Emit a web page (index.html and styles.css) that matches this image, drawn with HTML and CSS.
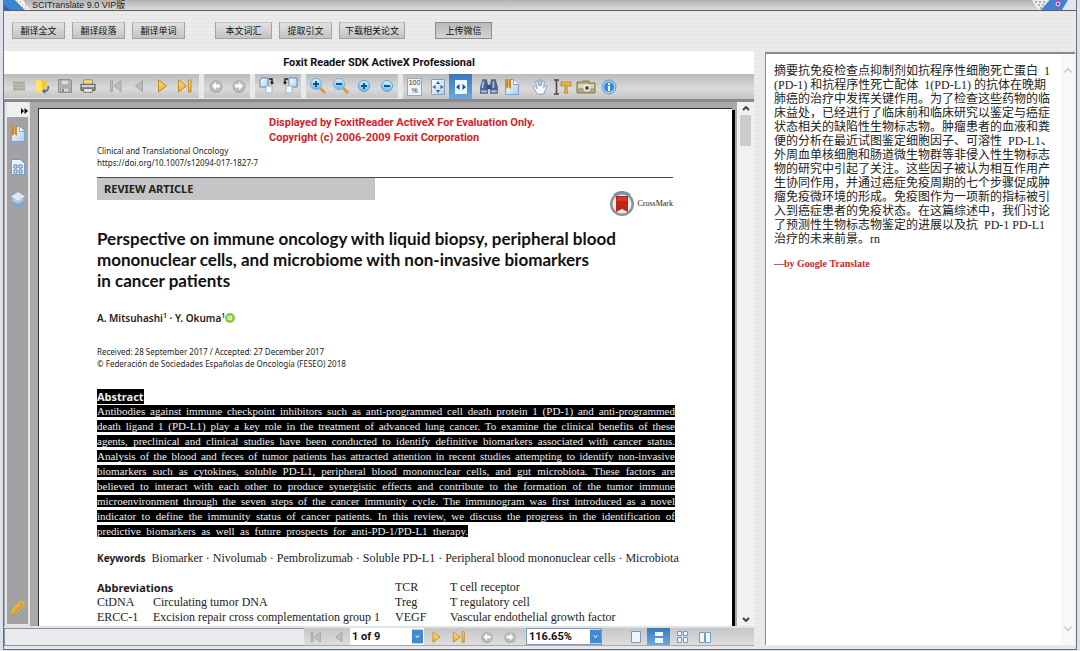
FILE: index.html
```html
<!DOCTYPE html>
<html lang="zh-CN">
<head>
<meta charset="utf-8">
<title>SCITranslate 9.0 VIP版</title>
<link rel="stylesheet" href="styles.css">
</head>
<body>
<svg class="defs" aria-hidden="true">
  <defs>
    <linearGradient id="gold" x1="0" y1="0" x2="0" y2="1"><stop offset="0" stop-color="#ffe27a"/><stop offset="1" stop-color="#f0a92a"/></linearGradient>
    <linearGradient id="sheet" x1="0" y1="0" x2="1" y2="1"><stop offset="0" stop-color="#ffffff"/><stop offset="1" stop-color="#a9cdee"/></linearGradient>
    <linearGradient id="lens" x1="0" y1="0" x2="0" y2="1"><stop offset="0" stop-color="#d8f0ff"/><stop offset="1" stop-color="#6fb6e8"/></linearGradient>
    <symbol id="first" viewBox="0 0 16 16"><path d="M2.500 2.500h2v11h-2zM13 2.500v11L6 8z"/></symbol>
    <symbol id="prev" viewBox="0 0 16 16"><path d="M11.500 2.500v11L4.500 8z"/></symbol>
    <symbol id="next" viewBox="0 0 16 16"><path d="M4.500 2v12L12.500 8z"/></symbol>
    <symbol id="last" viewBox="0 0 16 16"><path d="M1.500 2v12L9.500 8zM11.500 2h2.500v12h-2.500z"/></symbol>
    <symbol id="back" viewBox="0 0 16 16"><circle cx="8" cy="8.500" r="6.500" fill="#a8aea8"/><circle cx="8" cy="8" r="5.500" fill="#b9beb8"/><path d="M4 8l4-4v2.500h4v3H8V12z" fill="#fff"/></symbol>
    <symbol id="forward" viewBox="0 0 16 16"><circle cx="8" cy="8.500" r="6.500" fill="#a8aea8"/><circle cx="8" cy="8" r="5.500" fill="#b9beb8"/><path d="M12 8L8 4v2.500H4v3h4V12z" fill="#fff"/></symbol>
    <symbol id="bookmark" viewBox="0 0 16 18"><path d="M1.500 1.500h8l5 5v10h-13z" fill="url(#sheet)" stroke="#7ba3cc"/><path d="M9.500 1.500v5h5" fill="#fff" stroke="#7ba3cc"/><path d="M2 1h5v10L4.500 9 2 11z" fill="#c98a35"/><path d="M4.500 1v8" stroke="#e5b364"/></symbol>
    <symbol id="plus" viewBox="0 0 16 16"><circle cx="8" cy="8" r="5.500" fill="url(#lens)" stroke="#5aa3d8"/><path d="M5 8h6M8 5v6" stroke="#14558c" stroke-width="2"/></symbol>
    <symbol id="minus" viewBox="0 0 16 16"><circle cx="8" cy="8" r="5.500" fill="url(#lens)" stroke="#5aa3d8"/><path d="M5 8h6" stroke="#14558c" stroke-width="2"/></symbol>
  </defs>
</svg>

<div class="window">
  <header class="titlebar">
    <svg class="title-art" viewBox="0 0 26 10" aria-hidden="true"><path d="M0 0h11l10 10H0z" fill="#3d83cf"/><path d="M0 5l6 5H0z" fill="#2a66b0"/><path d="M11 0h8l7 10h-5z" fill="#f2f2f2"/><path d="M13 2h6M15 5h7M18 8h6" stroke="#a88" stroke-dasharray="1 2"/></svg>
    <h1 class="title-text">SCITranslate 9.0 VIP版</h1>
    <button class="close" type="button" aria-label="关闭">
      <svg viewBox="0 0 44 10" aria-hidden="true"><path d="M0 0h17l-8 10H6z" fill="#ececec"/><path d="M3 2h11M6 5h7M8 8h3" stroke="#777" stroke-dasharray="2 2"/><path d="M18 0h26l-8 10H9z" fill="#3d83cf"/><path d="M36 0h8v10h-14z" fill="#dfe6ef"/><circle cx="26" cy="4" r="3" fill="#d9b8ee" stroke="#8b5fc0"/><path d="M25 3l2 2M27 3l-2 2" stroke="#a0308c"/></svg>
    </button>
  </header>

  <nav class="commands" aria-label="翻译命令">
    <button class="cmd" type="button">翻译全文</button>
    <button class="cmd" type="button">翻译段落</button>
    <button class="cmd cmd-end" type="button">翻译单词</button>
    <button class="cmd cmd-wide" type="button">本文词汇</button>
    <button class="cmd" type="button">提取引文</button>
    <button class="cmd cmd-long cmd-end" type="button">下载相关论文</button>
    <button class="cmd cmd-wide cmd-dark" type="button">上传微信</button>
  </nav>

  <main class="workspace">
    <section class="viewer" aria-label="PDF">
      <h2 class="viewer-title">Foxit Reader SDK ActiveX Professional</h2>

      <div class="toolbar" role="toolbar" aria-label="Reader tools">
        <div class="group group-first">
          <button class="tool" type="button" aria-label="List"><svg viewBox="0 0 16 16"><path d="M2 3h12v10H2z" fill="#b9bab0"/><path d="M2 5h12M2 8h12M2 11h12" stroke="#a5a69a"/></svg></button>
          <button class="tool" type="button" aria-label="Open"><svg viewBox="0 0 18 18"><path d="M2 2h9l3 3v10l-3 2-9-2z" fill="#f5c92c"/><path d="M2 2l7 2v13l-7-2z" fill="#ffe566"/><path d="M16 9q1 6-5 6" stroke="#3d6fb0" stroke-width="2" fill="none"/><path d="M12 12l-3 3 4 3z" fill="#3d6fb0"/></svg></button>
          <button class="tool" type="button" aria-label="Save"><svg viewBox="0 0 16 16"><path d="M1.500 1.500h12l1 1v12h-13z" fill="#b5b5b5" stroke="#8d8d8d"/><path d="M4 2h8v5H4zM4 10h8v4H4z" fill="#dcdcdc" stroke="#999"/><path d="M6 11v3" stroke="#888" stroke-width="2"/></svg></button>
          <button class="tool" type="button" aria-label="Print"><svg viewBox="0 0 18 16"><path d="M4 1h10v6H4z" fill="#f6d876" stroke="#9a8950"/><path d="M1 6h16v7H1z" fill="#8b8e93" stroke="#55585c"/><path d="M2 8h14" stroke="#d5d8db" stroke-width="2"/><path d="M4 11h10v4H4z" fill="#f1f1ea" stroke="#6b6b6b"/></svg></button>
          <span class="sep"></span>
          <button class="tool nav off" type="button" aria-label="First page"><svg><use href="#first"/></svg></button>
          <button class="tool nav off" type="button" aria-label="Previous page"><svg><use href="#prev"/></svg></button>
          <button class="tool nav" type="button" aria-label="Next page"><svg><use href="#next"/></svg></button>
          <button class="tool nav" type="button" aria-label="Last page"><svg><use href="#last"/></svg></button>
        </div>
        <div class="group">
          <button class="tool" type="button" aria-label="Back"><svg><use href="#back"/></svg></button>
          <button class="tool" type="button" aria-label="Forward"><svg><use href="#forward"/></svg></button>
        </div>
        <div class="group">
          <button class="tool" type="button" aria-label="Rotate right"><svg viewBox="0 0 16 18"><path d="M3 1h6v9H1V3z" fill="url(#sheet)" stroke="#5f87b5"/><path d="M7 9h6v7H7z" fill="#f5f9ff" stroke="#9db4cc"/><path d="M10 2h3v3" stroke="#222" stroke-width="1.500" fill="none"/><path d="M11 5h4l-2 3z" fill="#222"/></svg></button>
          <button class="tool" type="button" aria-label="Rotate left"><svg viewBox="0 0 16 18"><path d="M7 1h8v9H7z" fill="url(#sheet)" stroke="#5f87b5"/><path d="M4 9h6v7H4z" fill="#f5f9ff" stroke="#9db4cc"/><path d="M6 2H3v3" stroke="#222" stroke-width="1.500" fill="none"/><path d="M1 5h4L3 8z" fill="#222"/></svg></button>
        </div>
        <div class="group">
          <button class="tool" type="button" aria-label="Zoom in"><svg class="wide" viewBox="0 0 18 18"><path d="M11 11l5 5" stroke="#d49a4a" stroke-width="3"/><circle cx="7" cy="7" r="5.500" fill="url(#lens)" stroke="#6fb0de"/><path d="M4 7h6M7 4v6" stroke="#14558c" stroke-width="2"/></svg></button>
          <button class="tool" type="button" aria-label="Zoom out"><svg class="wide" viewBox="0 0 18 18"><path d="M11 11l5 5" stroke="#d49a4a" stroke-width="3"/><circle cx="7" cy="7" r="5.500" fill="url(#lens)" stroke="#6fb0de"/><path d="M4 7h6" stroke="#14558c" stroke-width="2"/></svg></button>
          <button class="tool" type="button" aria-label="Increase"><svg><use href="#plus"/></svg></button>
          <button class="tool" type="button" aria-label="Decrease"><svg><use href="#minus"/></svg></button>
        </div>
        <div class="group group-last">
          <button class="tool" type="button" aria-label="Actual size"><span class="actual">100<br>%</span></button>
          <button class="tool" type="button" aria-label="Fit page"><svg viewBox="0 0 16 18"><path d="M1.500 1.500h13v15h-13z" fill="url(#sheet)" stroke="#7e9fc4"/><path d="M8 3l2 3H6zM8 15l2-3H6zM2.500 9l3-2v4zM13.500 9l-3-2v4z" fill="#3e5d80"/></svg></button>
          <button class="tool on" type="button" aria-label="Fit width" aria-pressed="true"><svg viewBox="0 0 16 18"><path d="M2 2h12v14H2z" fill="#eef6ff"/><path d="M3 9l3.500-3v6zM13 9L9.500 6v6z" fill="#1d4f8a"/></svg></button>
          <span class="sep"></span>
          <button class="tool" type="button" aria-label="Find"><svg class="wide" viewBox="0 0 18 16"><path d="M3 1h4l1 4v9H1V8zM11 1h4l2 7v6h-7V5z" fill="#4d6293"/><path d="M7 6h4v4H7z" fill="#3b4e7c"/><path d="M4 3L3 9M13 3v6" stroke="#b3c3e6" stroke-width="1.500"/><path d="M2 12h5M11 12h5" stroke="#a9bbdf" stroke-width="2"/></svg></button>
          <button class="tool" type="button" aria-label="Bookmark"><svg><use href="#bookmark"/></svg></button>
          <span class="sep"></span>
          <button class="tool" type="button" aria-label="Hand"><svg viewBox="0 0 18 18"><path d="M6 17L1 9l2-1 3 3L4 3l2-1 2 6V1h2v7l2-6 2 1-1 7 3-3 1 1-4 9z" fill="#f7fbff" stroke="#7b9cc0" stroke-linejoin="round"/></svg></button>
          <button class="tool" type="button" aria-label="Select text"><svg class="wide" viewBox="0 0 20 18"><path d="M1 2h5M1 16h5M3.500 2v14" stroke="#444" stroke-width="1.500"/><path d="M8 4h10v4h-2l-1-1h-1v6l1 1v1h-4v-1l1-1V7h-1l-1 1H8z" fill="#f0b840" stroke="#b98a2a"/></svg></button>
          <button class="tool" type="button" aria-label="Snapshot"><svg class="wide" viewBox="0 0 20 16"><path d="M1 3h5l1-1h6v2h6v10H1z" fill="#b5a779" stroke="#85794f"/><path d="M2 5h16v4H2z" fill="#ddd3ad"/><circle cx="11" cy="9" r="3.500" fill="#f4f4f0"/><circle cx="11" cy="9" r="2" fill="#4e4e62"/></svg></button>
          <button class="tool" type="button" aria-label="About"><svg viewBox="0 0 16 16"><circle cx="8" cy="8" r="7" fill="#a5cdee" stroke="#6a9cca"/><circle cx="8" cy="8" r="5" fill="#3a8bd0"/><path d="M8 4v2M8 7v5" stroke="#fff" stroke-width="2"/></svg></button>
        </div>
      </div>

      <div class="reader">
        <aside class="side">
          <button class="side-head" type="button" aria-label="Expand"><svg viewBox="0 0 7 6"><path d="M0 0l3 3-3 3zM3.500 0l3.500 3-3.500 3z" fill="#000"/></svg></button>
          <button class="side-btn" type="button" aria-label="Bookmarks"><svg><use href="#bookmark"/></svg></button>
          <button class="side-btn" type="button" aria-label="Pages"><svg viewBox="0 0 16 18"><path d="M1.500 1.500h9l4 4v11h-13z" fill="#e9f3fd" stroke="#6f9ccb"/><path d="M4 7h3v3H4zM9 7h3v3H9zM4 12h3v3H4zM9 12h3v3H9z" fill="#fff" stroke="#4679b4"/></svg></button>
          <button class="side-btn" type="button" aria-label="Layers"><svg viewBox="0 0 16 18"><path d="M8 9l7 4-7 4-7-4z" fill="#7ea6d4"/><path d="M8 5l7 4-7 4-7-4z" fill="#a9c6e6"/><path d="M8 1l7 4.500L8 10 1 5.500z" fill="#dbe9f7"/></svg></button>
          <button class="side-btn side-clip" type="button" aria-label="Attachments"><svg viewBox="0 0 16 18"><path d="M2 15l1-5 7-7q4-1 4 2l-8 9q-3 1-2-2l7-7" fill="none" stroke="#e0b03a" stroke-width="2"/><path d="M1 16l3-1 9-10" fill="none" stroke="#c18e22"/></svg></button>
        </aside>

        <div class="canvas">
          <article class="page">
            <p class="notice">Displayed by FoxitReader ActiveX For Evaluation Only.<br>Copyright (c) 2006-2009 Foxit Corporation</p>
            <p class="journal">Clinical and Translational Oncology<br>https://doi.org/10.1007/s12094-017-1827-7</p>
            <div class="kind-row">
              <p class="kind">REVIEW ARTICLE</p>
              <p class="crossmark"><svg viewBox="0 0 26 26" aria-hidden="true"><circle cx="13" cy="13" r="12" fill="#8d9299"/><path d="M5 4a12 12 0 0 1 16 0" fill="none" stroke="#6f93b8" stroke-width="2"/><circle cx="13" cy="13" r="9.500" fill="#e9ecef"/><path d="M7 5h12v16l-6-3-6 3z" fill="#bf2418"/><path d="M8 6h10v4H8z" fill="#cf3a2a"/></svg>CrossMark</p>
            </div>
            <h3 class="paper-title">Perspective on immune oncology with liquid biopsy, peripheral blood<br>mononuclear cells, and microbiome with non-invasive biomarkers<br>in cancer patients</h3>
            <p class="authors">A. Mitsuhashi<sup>1</sup> · Y. Okuma<sup>1</sup><svg viewBox="0 0 10 10" aria-hidden="true"><circle cx="5" cy="5" r="5" fill="#8cc63f"/><path d="M3 3v4M5 3v4h1q2-2 0-4z" stroke="#fff" fill="none"/></svg></p>
            <p class="dates">Received: 28 September 2017 / Accepted: 27 December 2017<br>© Federación de Sociedades Españolas de Oncología (FESEO) 2018</p>
            <h4 class="sub"><mark>Abstract</mark></h4>
            <p class="abstract"><mark>Antibodies against immune checkpoint inhibitors such as anti-programmed cell death protein 1 (PD-1) and anti-programmed<br>death ligand 1 (PD-L1) play a key role in the treatment of advanced lung cancer. To examine the clinical benefits of these<br>agents, preclinical and clinical studies have been conducted to identify definitive biomarkers associated with cancer status.<br>Analysis of the blood and feces of tumor patients has attracted attention in recent studies attempting to identify non-invasive<br>biomarkers such as cytokines, soluble PD-L1, peripheral blood mononuclear cells, and gut microbiota. These factors are<br>believed to interact with each other to produce synergistic effects and contribute to the formation of the tumor immune<br>microenvironment through the seven steps of the cancer immunity cycle. The immunogram was first introduced as a novel<br>indicator to define the immunity status of cancer patients. In this review, we discuss the progress in the identification of</mark></p>
            <p class="abstract abstract-end"><mark>predictive biomarkers as well as future prospects for anti-PD-1/PD-L1 therapy.</mark></p>
            <p class="keywords"><b>Keywords</b>Biomarker · Nivolumab · Pembrolizumab · Soluble PD-L1 · Peripheral blood mononuclear cells · Microbiota</p>
            <table class="abbr">
              <tr><th colspan="2" scope="colgroup">Abbreviations</th><td>TCR</td><td>T cell receptor</td></tr>
              <tr><td class="c1">CtDNA</td><td class="c2">Circulating tumor DNA</td><td class="c3">Treg</td><td>T regulatory cell</td></tr>
              <tr><td>ERCC-1</td><td>Excision repair cross complementation group 1</td><td>VEGF</td><td>Vascular endothelial growth factor</td></tr>
            </table>
          </article>
        </div>

        <div class="scroll">
          <button class="scroll-btn" type="button" aria-label="Scroll up"><svg viewBox="0 0 8 5"><path d="M1 4l3-3 3 3"/></svg></button>
          <span class="thumb"></span>
          <button class="scroll-btn scroll-down" type="button" aria-label="Scroll down"><svg viewBox="0 0 8 5"><path d="M1 1l3 3 3-3"/></svg></button>
        </div>
      </div>

      <footer class="status">
        <div class="message"></div>
        <div class="pager">
          <button class="tool nav off" type="button" aria-label="First page"><svg><use href="#first"/></svg></button>
          <button class="tool nav off" type="button" aria-label="Previous page"><svg><use href="#prev"/></svg></button>
          <label class="combo"><select aria-label="Page"><option>1 of 9</option></select><svg viewBox="0 0 12 15" aria-hidden="true"><path d="M0 0h12v15H0z" fill="#3f8ad0"/><path d="M4 6l2 3 2-3" fill="none" stroke="#fff"/></svg></label>
          <button class="tool nav" type="button" aria-label="Next page"><svg><use href="#next"/></svg></button>
          <button class="tool nav" type="button" aria-label="Last page"><svg><use href="#last"/></svg></button>
          <span class="sep"></span>
          <button class="tool" type="button" aria-label="Back"><svg><use href="#back"/></svg></button>
          <button class="tool" type="button" aria-label="Forward"><svg><use href="#forward"/></svg></button>
          <span class="sep"></span>
          <label class="combo combo-zoom"><select aria-label="Zoom"><option>116.65%</option></select><svg viewBox="0 0 12 15" aria-hidden="true"><path d="M0 0h12v15H0z" fill="#3f8ad0"/><path d="M4 6l2 3 2-3" fill="none" stroke="#fff"/></svg></label>
          <div class="layouts">
            <button class="tool" type="button" aria-label="Single page"><svg viewBox="0 0 14 16"><path d="M2.500 2.500h9v11h-9z" fill="#edf5fd" stroke="#6f9ccb"/></svg></button>
            <button class="tool on" type="button" aria-label="Continuous" aria-pressed="true"><svg viewBox="0 0 14 16"><path d="M3 3h8v4H3zM3 9h8v5H3z" fill="#f2f8ff"/></svg></button>
            <button class="tool" type="button" aria-label="Continuous facing"><svg viewBox="0 0 14 16"><path d="M2.500 2.500h4v4h-4zM8.500 2.500h4v4h-4zM2.500 8.500h4v5h-4zM8.500 8.500h4v5h-4z" fill="#edf5fd" stroke="#6f9ccb"/></svg></button>
            <button class="tool" type="button" aria-label="Facing"><svg viewBox="0 0 14 16"><path d="M1.500 3.500h5v10h-5zM7.500 3.500h5v10h-5z" fill="#edf5fd" stroke="#6f9ccb"/></svg></button>
          </div>
        </div>
      </footer>
    </section>

    <section class="translation" aria-label="译文">
      <div class="translation-body">
        <p class="zh">摘要抗免疫检查点抑制剂如抗程序性细胞死亡蛋白&ensp;1<br>(PD-1) 和抗程序性死亡配体&ensp;1(PD-L1) 的抗体在晚期<br>肺癌的治疗中发挥关键作用。为了检查这些药物的临<br>床益处，已经进行了临床前和临床研究以鉴定与癌症<br>状态相关的缺陷性生物标志物。肿瘤患者的血液和粪<br>便的分析在最近试图鉴定细胞因子、可溶性&ensp;PD-L1、<br>外周血单核细胞和肠道微生物群等非侵入性生物标志<br>物的研究中引起了关注。这些因子被认为相互作用产<br>生协同作用，并通过癌症免疫周期的七个步骤促成肿<br>瘤免疫微环境的形成。免疫图作为一项新的指标被引<br>入到癌症患者的免疫状态。在这篇综述中，我们讨论<br>了预测性生物标志物鉴定的进展以及抗&ensp;PD-1 PD-L1<br>治疗的未来前景。rn</p>
        <p class="credit">—by Google Translate</p>
      </div>
      <div class="scroll scroll-pale">
        <button class="scroll-btn" type="button" aria-label="Scroll up"><svg viewBox="0 0 8 5"><path d="M1 4l3-3 3 3"/></svg></button>
        <button class="scroll-btn scroll-down" type="button" aria-label="Scroll down"><svg viewBox="0 0 8 5"><path d="M1 1l3 3 3-3"/></svg></button>
      </div>
    </section>
  </main>
</div>
</body>
</html>
```
FILE: styles.css
```css
* { box-sizing: border-box; }
body, h1, h2, h3, h4, p { margin: 0; }
body {
  height: 100vh;
  padding: 0 3px 1px;
  background: #dde1e8;
  color: #222;
  font-family: "Liberation Sans", "Noto Sans CJK SC", sans-serif;
  overflow: hidden;
}
button { padding: 0; border: 0; background: none; font: inherit; color: inherit; }
.defs { position: absolute; width: 0; height: 0; }

.window {
  display: flex;
  flex-direction: column;
  height: 100%;
  border: 1px solid #6c7078;
  border-top: 0;
  background: repeating-linear-gradient(#ebebeb 0 2px, #e7e7e7 2px 4px);
}

/* title bar */
.titlebar {
  display: flex;
  flex: none;
  height: 11px;
  border-bottom: 1px solid #5f5f5f;
  background: linear-gradient(#b2b2b2, #dcdcdc);
}
.title-art { width: 26px; height: 10px; }
.title-text { flex: 1; padding-left: 2px; font-size: 9px; font-weight: 400; line-height: 11px; white-space: nowrap; }
.close { width: 44px; height: 10px; }
.close svg { display: block; width: 44px; height: 10px; }

/* command buttons */
.commands { display: flex; flex: none; gap: 7px; padding: 11px 8px 12px; }
.cmd {
  width: 53px;
  height: 17px;
  border: 1px solid #a2a2a2;
  border-top-color: #c4c4c4;
  background: linear-gradient(#e2e2e2, #c2c2c2);
  color: #111;
  font-size: 9px;
  line-height: 14px;
  white-space: nowrap;
}
.cmd-wide { width: 57px; }
.cmd-long { width: 66px; }
.cmd-end { margin-right: 23px; }
.cmd-dark { border-color: #8c8c8c; background: linear-gradient(#b9b9b9, #d3d3d3); }

.workspace { display: flex; flex: 1; min-height: 0; gap: 11px; padding-right: 1px; }

/* viewer */
.viewer { display: flex; flex: 1; flex-direction: column; min-width: 0; padding-bottom: 3px; }
.viewer-title {
  flex: none;
  background: #fff;
  color: #111;
  font: bold 11px/23px Roboto, sans-serif;
  text-align: center;
}
.toolbar {
  display: flex;
  flex: none;
  gap: 5px;
  height: 28px;
  border-bottom: 3px solid #8a8a8a;
  background: #e9e9e9;
}
.group { display: flex; align-items: center; height: 24px; background: linear-gradient(#bcbcbc, #dadada 60%, #c4c4c4); }
.group-first { padding: 0 3px; }
.group-last { flex: 1; height: 25px; }
.tool { display: flex; flex: none; align-items: center; justify-content: center; width: 23px; height: 100%; }
.tool svg { width: 16px; height: 18px; }
.tool .wide { width: 20px; }
.tool.on { background: linear-gradient(#3b77b8, #6aa9e2); }
.nav { fill: url(#gold); stroke: #c08a2a; }
.nav.off { fill: #bdbdbd; stroke: #a6a6a6; }
.sep { flex: none; width: 5px; }
.actual {
  width: 15px;
  height: 18px;
  border: 1px solid #8fa9c6;
  background: #eef4fa;
  color: #333;
  font: 7px/8px "Liberation Sans", sans-serif;
}

.reader { display: flex; flex: 1; min-height: 0; background: #a9a9ab; }
.side {
  display: flex;
  flex: none;
  flex-direction: column;
  align-items: center;
  width: 25px;
  margin: 0 2px 0 1px;
  border: 2px solid #e6e6e6;
  border-top: 0;
  background: #a2a2a4;
}
.side-head { align-self: stretch; height: 15px; padding: 3px 4px 0 14px; background: #efefef; }
.side-head svg { display: block; width: 7px; height: 6px; }
.side-btn { height: 33px; }
.side-btn svg { display: block; width: 16px; height: 18px; }
.side-clip { margin-top: auto; }

.canvas { display: flex; flex: 1; min-width: 0; padding: 6px 5px 0 6px; overflow: hidden; }
.page {
  flex: 1;
  min-width: 0;
  padding: 6px 59px 0 58px;
  overflow: hidden;
  border: 1px solid #333;
  border-width: 1px 0 0 1px;
  background: #fff;
  box-shadow: 3px 2px #000;
}
.page p, .page h3, .page h4 { white-space: nowrap; }
.notice { padding-left: 172px; color: #d8222a; font: bold 11px/15px Roboto, sans-serif; }
.journal, .dates { font: 8px/12px "Noto Sans", sans-serif; }
.kind-row { display: flex; justify-content: space-between; align-items: flex-start; margin-top: 8px; border-top: 1px solid #4a4a4a; }
.kind { width: 278px; padding-left: 7px; background: #c5c5c7; font: bold 11px/22px "Noto Sans", sans-serif; }
.crossmark { display: flex; align-items: center; gap: 2px; margin-top: 13px; font: 8px/12px "Liberation Serif", serif; }
.crossmark svg { width: 26px; height: 26px; }
.paper-title { margin-top: 11px; color: #111; font: bold 17px/21px Lato, sans-serif; }
.authors { margin-top: 19px; font: 600 10px/16px "Noto Sans", sans-serif; }
.authors sup { font-size: 7px; line-height: 1; }
.authors svg { width: 10px; height: 10px; vertical-align: -1px; }
.dates { margin-top: 20px; }
.sub { margin-top: 20px; font: bold 11px/14px "Noto Sans", sans-serif; }
mark { background: #000; color: #eee; }
.abstract { margin-right: -2px; font: 11px/15px "Liberation Serif", serif; text-align: justify; text-align-last: justify; }
.abstract-end { width: 371px; }
.keywords { margin-top: 12px; font: 12px/15px "Liberation Serif", serif; }
.keywords b { margin-right: 6px; font: bold 10px/15px "Noto Sans", sans-serif; }
.abbr { margin-top: 14px; border-spacing: 0; font: 12px/15px "Liberation Serif", serif; white-space: nowrap; }
.abbr td, .abbr th { padding: 0; text-align: left; }
.abbr th { font: bold 11px/15px "Noto Sans", sans-serif; }
.c1 { width: 56px; }
.c2 { width: 242px; }
.c3 { width: 55px; }

/* scroll bars */
.scroll { display: flex; flex: none; flex-direction: column; align-items: center; width: 17px; background: #f1f1f1; }
.scroll-btn { display: flex; align-items: center; justify-content: center; width: 100%; height: 13px; }
.scroll-btn svg { width: 8px; height: 5px; fill: none; stroke: #444; stroke-width: 2; }
.scroll-down { margin-top: auto; }
.thumb { width: 11px; height: 31px; background: #cdcdcd; }
.scroll-pale { width: 14px; background: #f8f8f8; padding: 10px 0; }
.scroll-pale .scroll-btn svg { width: 10px; height: 7px; stroke: #c2c2c2; stroke-width: 1; }

/* status bar */
.status { display: flex; flex: none; height: 20px; border-top: 2px solid #dfe3e8; }
.message { flex: 1; border: 1px solid #7f93ac; border-right: 0; background: #ebebeb; }
.pager { display: flex; flex: none; align-items: center; width: 450px; border-bottom: 1px solid #a9a9a9; background: linear-gradient(#c6c6c6, #dedede); }
.pager .tool svg { width: 14px; height: 16px; }
.combo { position: relative; display: flex; flex: none; width: 74px; height: 17px; }
.combo-zoom { width: 76px; }
.combo select {
  width: 100%;
  padding: 0 2px;
  border: 0;
  border-radius: 0;
  appearance: none;
  background: #fff;
  color: #111;
  font: bold 11px/16px Roboto, sans-serif;
}
.combo-zoom select { border: 1px solid #7a9cc4; }
.combo svg { position: absolute; top: 1px; right: 1px; width: 11px; height: 15px; pointer-events: none; }
.layouts { display: flex; height: 100%; margin-left: 22px; }

/* translation */
.translation { display: flex; flex: none; width: 310px; margin: 1px 0 4px; border: 1px solid #8a8a8a; border-width: 2px 0 0 1px; background: #fff; }
.translation-body { flex: 1; padding: 10px 8px; white-space: nowrap; }
.zh { color: #222; font: 12px/14px "Liberation Serif", "Noto Sans CJK SC", serif; }
.credit { margin-top: 11px; color: #d8222a; font: bold 10px/14px "Liberation Serif", serif; }
```
